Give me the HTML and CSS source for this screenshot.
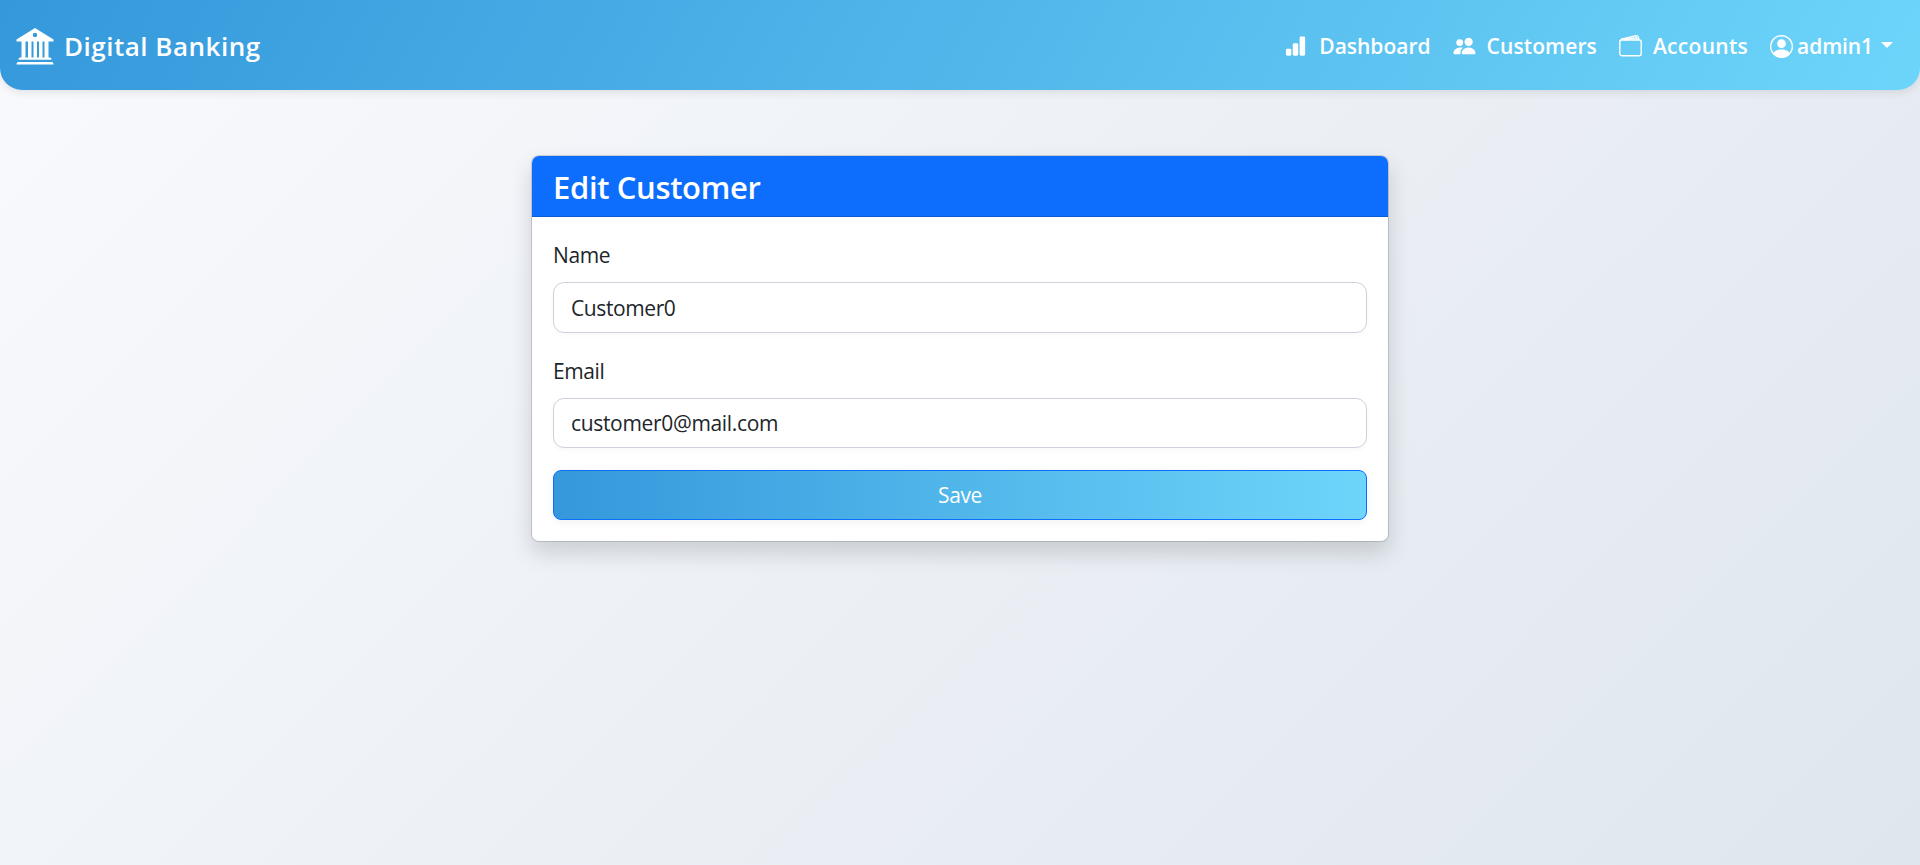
FILE: index.html
```html
<!DOCTYPE html>
<html lang="en">
<head>
<meta charset="utf-8">
<title>Digital Banking</title>
<link rel="stylesheet" href="styles.css">
</head>
<body>
<nav class="navbar">
  <a class="brand">
    <svg class="brand-icon" viewBox="0 0 37 37" fill="currentColor"><path fill-rule="evenodd" d="M18.500 0 37 11.500V13.500H0V11.500ZM18.500 4.800a2.200 2.200 0 1 0 0 4.400 2.200 2.200 0 0 0 0-4.400Z"/><path d="M5 13h4v17H5zM11.500 13h3.500v17h-3.500zM17 13h3.500v17H17zM22.500 13H26v17h-3.500zM28 13h4v17h-4zM3.500 29.500h30q1.500 0 1.500 2.300H2q0-2.300 1.500-2.300ZM1.500 34h34q1.500 0 1.500 2.500H0q0-2.500 1.500-2.500Z"/></svg>
    <span class="brand-text">Digital Banking</span>
  </a>
  <div class="nav-links">
    <a class="nav-link"><svg class="icon bars" viewBox="0 0 16 16" fill="currentColor"><path d="M1 11a1 1 0 0 1 1-1h2a1 1 0 0 1 1 1v3a1 1 0 0 1-1 1H2a1 1 0 0 1-1-1zm5-4a1 1 0 0 1 1-1h2a1 1 0 0 1 1 1v7a1 1 0 0 1-1 1H7a1 1 0 0 1-1-1zm5-5a1 1 0 0 1 1-1h2a1 1 0 0 1 1 1v12a1 1 0 0 1-1 1h-2a1 1 0 0 1-1-1z"/></svg><span class="dashboard">Dashboard</span></a>
    <a class="nav-link"><svg class="icon" viewBox="0 0 16 16" fill="currentColor"><path d="M7 14s-1 0-1-1 1-4 5-4 5 3 5 4-1 1-1 1zm4-6a3 3 0 1 0 0-6 3 3 0 0 0 0 6m-5.784 6A2.240 2.240 0 0 1 5 13c0-1.355.68-2.750 1.936-3.720A6.300 6.300 0 0 0 5 9c-4 0-5 3-5 4s1 1 1 1zM4.500 8a2.500 2.500 0 1 0 0-5 2.500 2.500 0 0 0 0 5"/></svg><span class="customers">Customers</span></a>
    <a class="nav-link"><svg class="icon" viewBox="0 0 23 22" fill="none" stroke="currentColor" stroke-width="1.400"><rect x=".8" y="5" width="21.400" height="15.700" rx="2"/><path d="M1 6 2.500 4.200 17 .8Q19 .4 19.400 2.400L20 5M5 5 17.500 2.800 18.500 5"/></svg><span class="accounts">Accounts</span></a>
    <a class="nav-link user"><svg class="icon" viewBox="0 0 16 16" fill="currentColor"><path d="M11 6a3 3 0 1 1-6 0 3 3 0 0 1 6 0"/><path fill-rule="evenodd" d="M0 8a8 8 0 1 1 16 0A8 8 0 0 1 0 8m8-7a7 7 0 0 0-5.468 11.370C3.242 11.226 4.805 10 8 10s4.757 1.225 5.468 2.370A7 7 0 0 0 8 1"/></svg><span class="username">admin1</span><span class="caret"></span></a>
  </div>
</nav>
<main class="page">
  <section class="card">
    <h1 class="card-header"><span>Edit Customer</span></h1>
    <form class="card-body">
      <label class="label" for="name">Name</label>
      <input class="field name" id="name" value="Customer0">
      <label class="label" for="email">Email</label>
      <input class="field email" id="email" value="customer0@mail.com">
      <button class="save" type="button">Save</button>
    </form>
  </section>
</main>
</body>
</html>
```
FILE: styles.css
```css
* { box-sizing: border-box; }
html { height: 100%; }
body {
  margin: 0;
  min-height: 100%;
  font: 21px/33px "Open Sans", "Noto Sans", sans-serif;
  letter-spacing: -.4px;
  color: #212529;
  background: linear-gradient(135deg, #f9fafd, #dfe6ee);
}
.navbar {
  height: 90px;
  padding: 2px 27px 0 16px;
  display: flex;
  align-items: center;
  justify-content: space-between;
  color: #fff;
  background: linear-gradient(120deg, #3498db, #6dd5fa);
  border-radius: 0 0 22px 22px;
  box-shadow: 0 2px 10px rgba(0, 0, 0, .1);
}
.brand, .nav-links, .nav-link { display: flex; align-items: center; }
.brand { padding-top: 1px; }
.brand-icon { width: 38px; height: 37px; margin-right: 10px; }
.brand-text { font-size: 26px; font-weight: 600; letter-spacing: .5px; }
.nav-links { gap: 22px; font-weight: 600; letter-spacing: 0; }
.icon { width: 23px; height: 22px; margin-right: 11px; }
.bars { margin-right: 12px; }
.customers { letter-spacing: .1px; }
.accounts { letter-spacing: .3px; }
.username { letter-spacing: -.1px; }
.user .icon { height: 23px; margin-right: 4px; }
.caret {
  margin: -3px 0 0 8px;
  border: 6.5px solid transparent;
  border-top-color: #fff;
  border-bottom: 0;
}
.page { display: flex; justify-content: center; padding-top: 65px; }
.card {
  width: 858px;
  height: 387px;
  border: 1px solid rgba(0, 0, 0, .14);
  border-radius: 8px;
  background: #fff;
  background-clip: padding-box;
  box-shadow: 0 11px 22px rgba(0, 0, 0, .15);
}
.card-header {
  height: 61px;
  margin: 0;
  padding: 0 21px;
  border-bottom: 1px solid #0b5acf;
  border-radius: 7px 7px 0 0;
  background: #0d6efd;
  color: #fff;
  font-size: 31px;
  font-weight: 600;
  line-height: 62px;
  letter-spacing: -.35px;
}
.card-body { display: flex; flex-direction: column; padding: 22px 21px; }
.label { height: 33px; margin: 0 0 10px; }
.field {
  width: 100%;
  height: 50px;
  margin: 0 0 22px;
  padding: 0 17px;
  font: inherit;
  letter-spacing: inherit;
  color: inherit;
  background: #fff;
  border: 1px solid #ced2da;
  border-radius: 11px;
  box-shadow: 0 2px 5px rgba(0, 0, 0, .03);
}
.field.name { height: 51px; }
.field.email { letter-spacing: -.33px; }
.save {
  height: 50px;
  padding: 0;
  font: inherit;
  letter-spacing: inherit;
  color: #fff;
  background: linear-gradient(90deg, #3498db, #6dd5fa);
  border: 1px solid #0d6efd;
  border-radius: 8px;
  box-shadow: 0 2px 10px rgba(0, 0, 0, .06);
}
```
